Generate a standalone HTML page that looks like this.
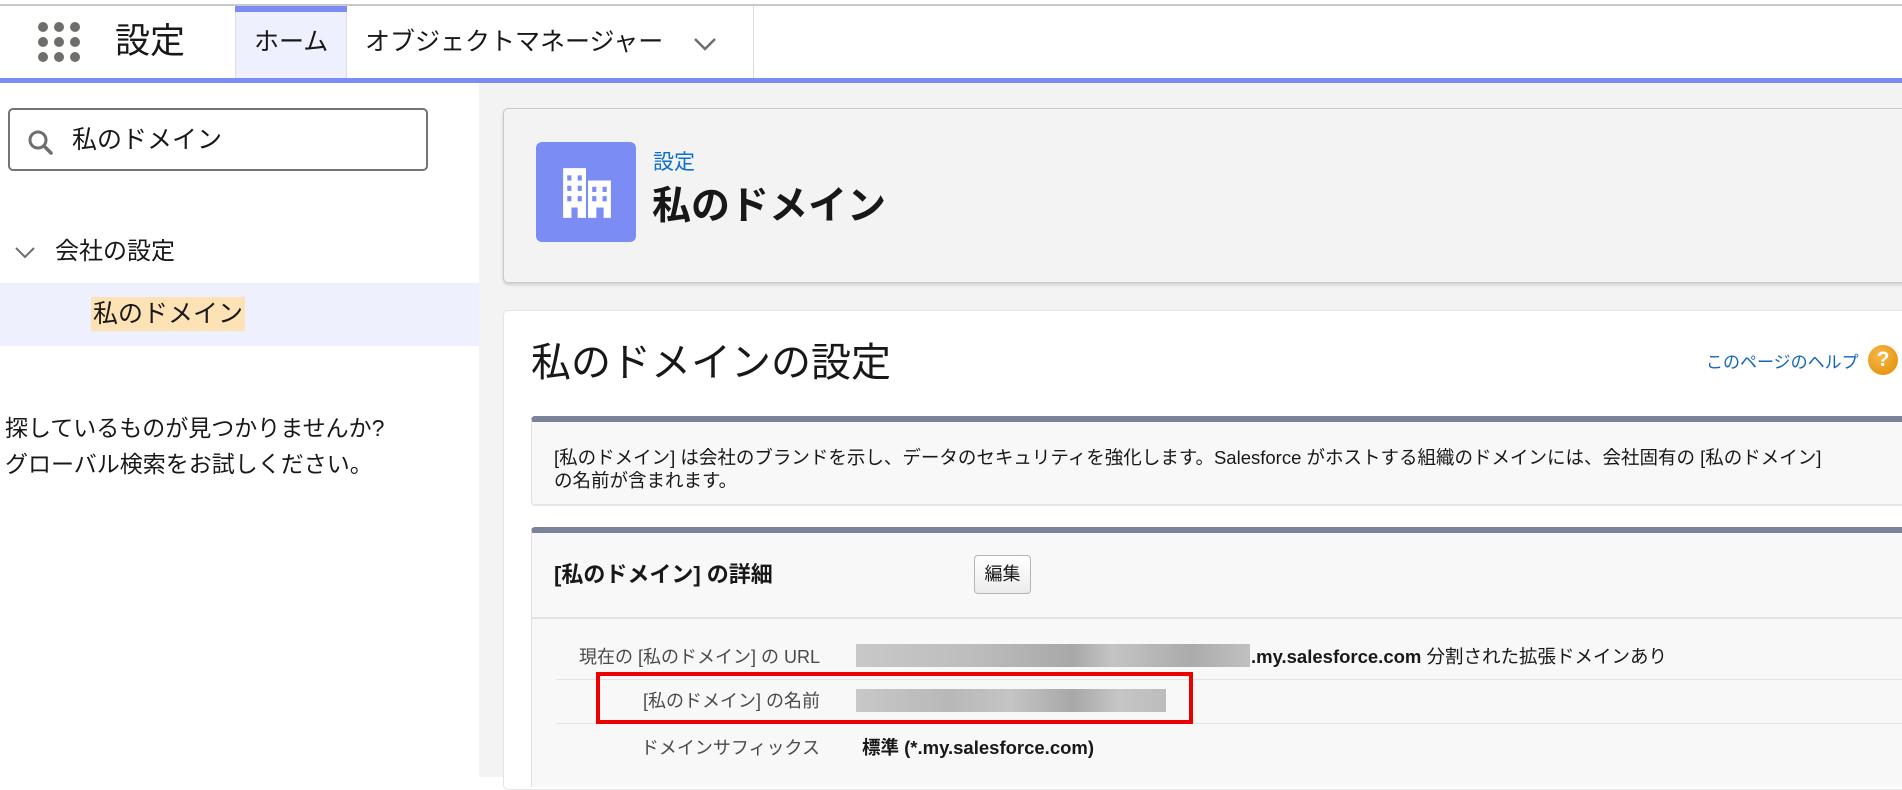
<!DOCTYPE html>
<html><head><meta charset="utf-8"><style>
*{margin:0;padding:0;box-sizing:border-box}
body{width:1902px;height:777px;overflow:hidden;background:#fff;font-family:"Liberation Sans","Noto Sans CJK JP",sans-serif;color:#181818;position:relative}
.a{position:absolute;white-space:nowrap}
</style></head><body>
<div class="a" style="left:0;top:4px;width:1902px;height:2px;background:#c9c9c9"></div>
<svg class="a" style="left:36px;top:20px" width="46" height="44" viewBox="0 0 46 44">
<g fill="#706e6b"><circle cx="7" cy="7" r="5"/><circle cx="23" cy="7" r="5"/><circle cx="39" cy="7" r="5"/><circle cx="7" cy="22" r="5"/><circle cx="23" cy="22" r="5"/><circle cx="39" cy="22" r="5"/><circle cx="7" cy="37" r="5"/><circle cx="23" cy="37" r="5"/><circle cx="39" cy="37" r="5"/></g></svg>
<div class="a" style="left:115px;top:20px;font-size:35px;line-height:44px">設定</div>
<div class="a" style="left:235px;top:6px;width:112px;height:72px;background:#eef1fd;border-left:1px solid #ddd;border-right:1px solid #ddd"></div>
<div class="a" style="left:235px;top:6px;width:112px;height:6px;background:#7b8df5"></div>
<div class="a" style="left:254px;top:27px;font-size:25px;line-height:30px">ホーム</div>
<div class="a" style="left:365px;top:27px;font-size:25px;line-height:30px">オブジェクトマネージャー</div>
<svg class="a" style="left:693px;top:36px" width="24" height="16"><path d="M2 3 L12 13 L22 3" fill="none" stroke="#706e6b" stroke-width="2.5"/></svg>
<div class="a" style="left:753px;top:6px;width:1px;height:72px;background:#ddd"></div>
<div class="a" style="left:0;top:78px;width:1902px;height:5px;background:#7b8df5"></div>
<div class="a" style="left:479px;top:83px;width:1423px;height:694px;background:#f3f3f3"></div>
<div class="a" style="left:8px;top:108px;width:420px;height:63px;border:2px solid #747474;border-radius:5px;background:#fff"></div>
<svg class="a" style="left:26px;top:128px" width="30" height="30"><circle cx="12" cy="12" r="8" fill="none" stroke="#706e6b" stroke-width="3"/><path d="M18 18 L25 25" stroke="#706e6b" stroke-width="3.5" stroke-linecap="round"/></svg>
<div class="a" style="left:72px;top:125px;font-size:25px;line-height:30px">私のドメイン</div>
<svg class="a" style="left:14px;top:245px" width="22" height="16"><path d="M2 3 L11 12 L20 3" fill="none" stroke="#706e6b" stroke-width="2"/></svg>
<div class="a" style="left:55px;top:237px;font-size:24px;line-height:30px">会社の設定</div>
<div class="a" style="left:0;top:283px;width:479px;height:63px;background:#eef1fd"></div>
<div class="a" style="left:91px;top:297px;height:34px;background:#fce2b4;font-size:25px;line-height:34px;padding:0 2px">私のドメイン</div>
<div class="a" style="left:5px;top:410px;font-size:23px;line-height:36px">探しているものが見つかりませんか?<br>グローバル検索をお試しください。</div>
<div class="a" style="left:503px;top:108px;width:1420px;height:175px;background:#f3f3f3;border:1px solid #c9c9c9;border-radius:5px;box-shadow:0 2px 3px rgba(0,0,0,.15)"></div>
<div class="a" style="left:536px;top:142px;width:100px;height:100px;background:#7b8df5;border-radius:6px"></div>
<svg class="a" style="left:561px;top:166px" width="52" height="54" viewBox="0 0 50 52"><path fill="#fff" d="M2 2h22v48h-8v-10h-6v10H2z M26 14h22v36h-7v-10h-7v10h-8z"/><g fill="#7b8df5"><rect x="6" y="9" width="4" height="5"/><rect x="16" y="9" width="4" height="5"/><rect x="6" y="19" width="4" height="5"/><rect x="16" y="19" width="4" height="5"/><rect x="6" y="29" width="4" height="5"/><rect x="16" y="29" width="4" height="5"/><rect x="30" y="20" width="4" height="5"/><rect x="40" y="20" width="4" height="5"/><rect x="30" y="29" width="4" height="5"/><rect x="40" y="29" width="4" height="5"/></g></svg>
<div class="a" style="left:653px;top:150px;font-size:21px;line-height:26px;color:#0b6fd0">設定</div>
<div class="a" style="left:652px;top:183px;font-size:39px;line-height:48px;font-weight:bold">私のドメイン</div>
<div class="a" style="left:503px;top:310px;width:1420px;height:480px;background:#fff;border:1px solid #e5e5e5;border-radius:5px"></div>
<div class="a" style="left:531px;top:338px;font-size:40px;line-height:50px">私のドメインの設定</div>
<div class="a" style="left:1706px;top:351px;font-size:17px;line-height:24px;color:#1566b8">このページのヘルプ</div>
<div class="a" style="left:1868px;top:345px;width:30px;height:30px;border-radius:50%;background:radial-gradient(circle at 40% 35%,#f6b94a,#e08a00);color:#fff;font-weight:bold;font-size:21px;line-height:30px;text-align:center">?</div>
<div class="a" style="left:531px;top:416px;width:1380px;height:90px;background:#f8f8f8;border-top:6px solid #7a8399;border-left:1px solid #e0e0e0;border-bottom:2px solid #e6e6e6;border-radius:4px 0 0 4px"></div>
<div class="a" style="left:554px;top:446px;font-size:18.5px;line-height:23px;white-space:normal;width:1340px">[私のドメイン] は会社のブランドを示し、データのセキュリティを強化します。Salesforce がホストする組織のドメインには、会社固有の [私のドメイン]<br>の名前が含まれます。</div>
<div class="a" style="left:531px;top:527px;width:1380px;height:260px;background:#f8f8f8;border-top:6px solid #7a8399;border-left:1px solid #e0e0e0;border-radius:4px 0 0 0"></div>
<div class="a" style="left:554px;top:561px;font-size:22px;line-height:28px;font-weight:bold">[私のドメイン] の詳細</div>
<div class="a" style="left:974px;top:555px;width:57px;height:39px;border:1px solid #b5b5b5;border-radius:4px;background:linear-gradient(#fff,#ececec);font-size:18px;line-height:37px;text-align:center">編集</div>
<div class="a" style="left:532px;top:617px;width:1370px;height:2px;background:#e3e3e3"></div>
<div class="a" style="left:556px;top:679px;width:1346px;height:1px;background:#e3e3e3"></div>
<div class="a" style="left:556px;top:723px;width:1346px;height:1px;background:#e3e3e3"></div>
<div class="a" style="left:500px;top:645px;width:320px;text-align:right;font-size:18px;line-height:24px;color:#4a4a4a">現在の [私のドメイン] の URL</div>
<div class="a" style="left:856px;top:644px;width:394px;height:23px;background:linear-gradient(90deg,#c8c8c8,#bdbdbd 30%,#a8a8a8 55%,#c4c4c4 65%,#ababab 85%,#c0c0c0)"></div>
<div class="a" style="left:1251px;top:645px;font-size:18.5px;line-height:24px"><b>.my.salesforce.com</b> 分割された拡張ドメインあり</div>
<div class="a" style="left:500px;top:689px;width:320px;text-align:right;font-size:18px;line-height:24px;color:#4a4a4a">[私のドメイン] の名前</div>
<div class="a" style="left:856px;top:689px;width:310px;height:23px;background:linear-gradient(90deg,#c8c8c8,#b8b8b8 30%,#c4c4c4 50%,#a8a8a8 70%,#c6c6c6 85%,#bcbcbc)"></div>
<div class="a" style="left:596px;top:672px;width:597px;height:52px;border:4px solid #ee0000"></div>
<div class="a" style="left:500px;top:736px;width:320px;text-align:right;font-size:18px;line-height:24px;color:#4a4a4a">ドメインサフィックス</div>
<div class="a" style="left:862px;top:736px;font-size:18.5px;line-height:24px;font-weight:bold">標準 (*.my.salesforce.com)</div>
</body></html>
